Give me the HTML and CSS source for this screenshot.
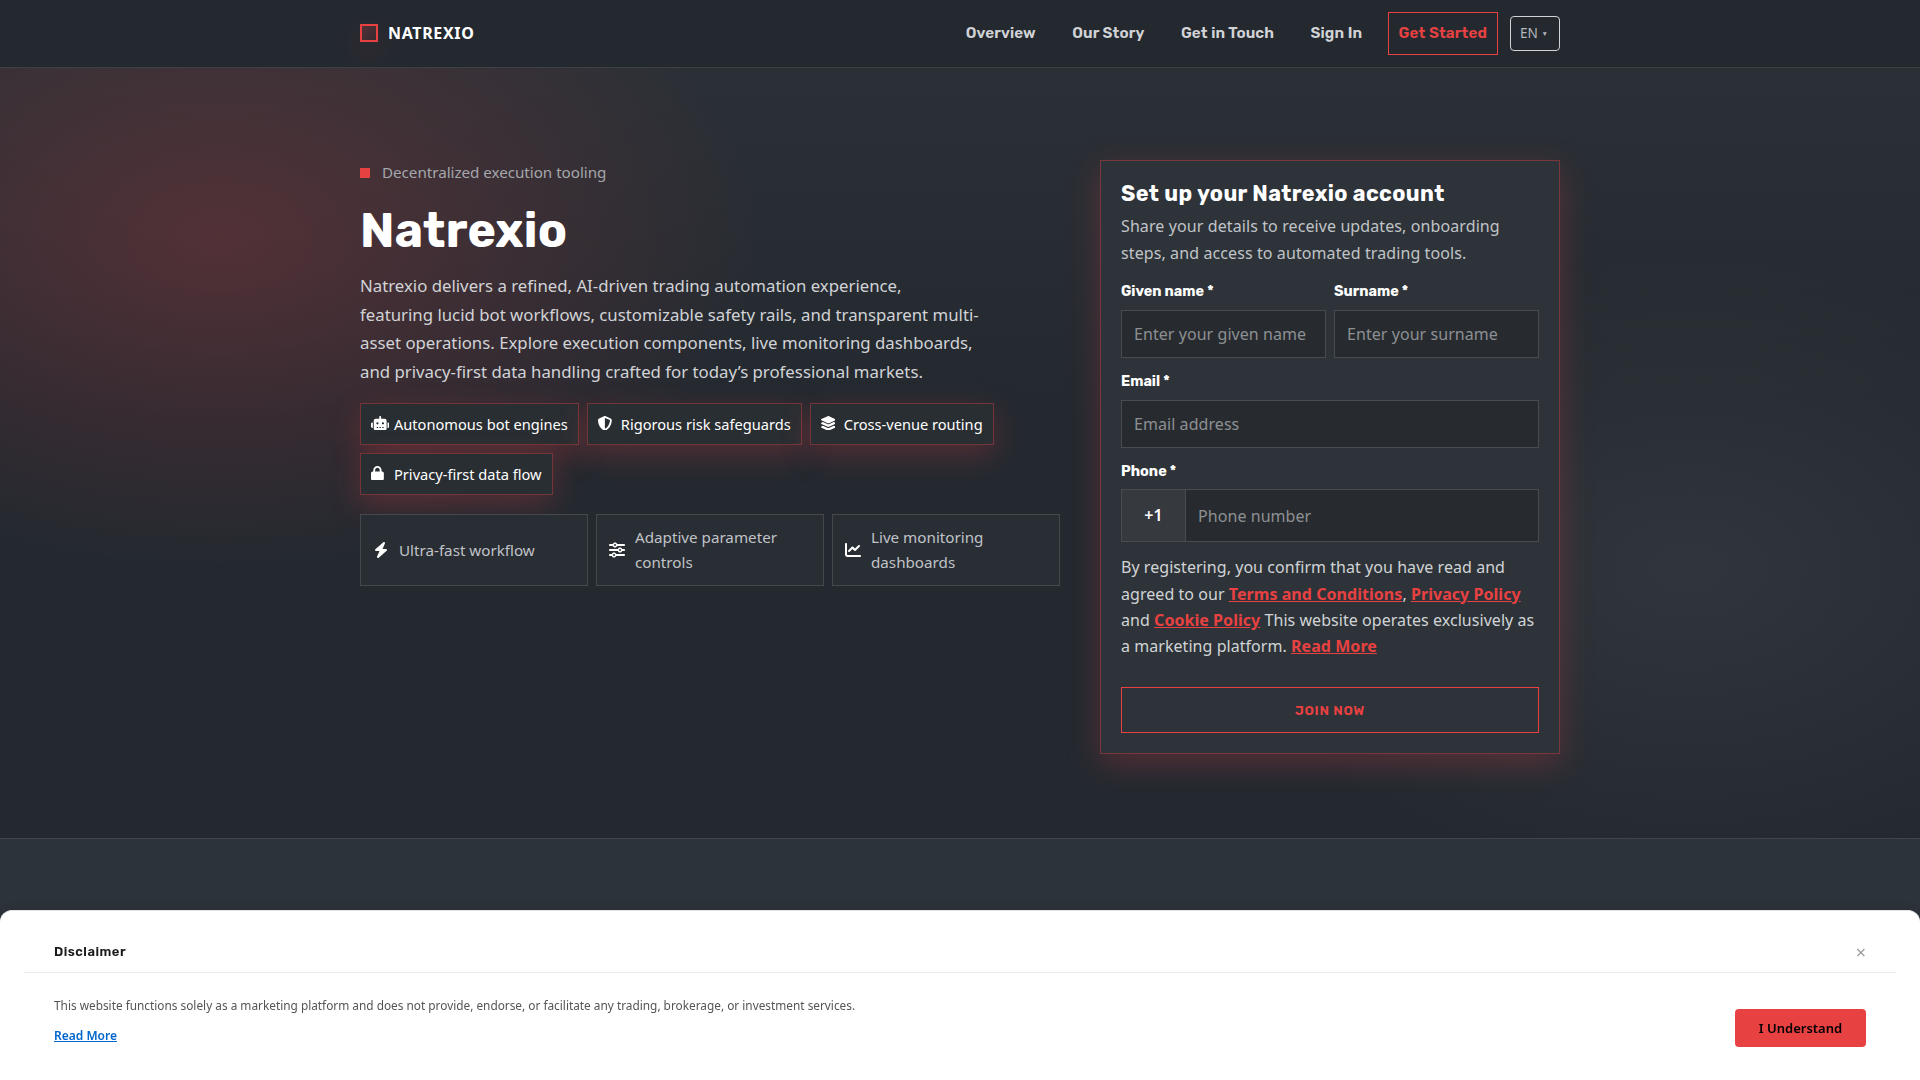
FILE: index.html
```html
<!DOCTYPE html>
<html lang="en">
<head>
    <meta charset="UTF-8">
    <meta name="viewport" content="width=device-width, initial-scale=1.0">
    <title>Natrexio</title>
    <link rel="stylesheet" href="styles.css">
</head>
<body>
    <header class="site-header">
        <div class="container header-inner">
            <a href="#" class="brand">
                <span class="brand-mark"></span>
                <span class="brand-name">NATREXIO</span>
            </a>
            <nav class="nav">
                <a href="#">Overview</a>
                <a href="#">Our Story</a>
                <a href="#">Get in Touch</a>
                <a href="#">Sign In</a>
                <a href="#" class="nav-cta">Get Started</a>
            </nav>
            <button type="button" class="lang">EN <span class="caret">▼</span></button>
        </div>
    </header>

    <main>
        <section class="hero">
            <div class="container hero-grid">
                <div class="hero-copy">
                    <div class="eyebrow"><span class="dot"></span>Decentralized execution tooling</div>
                    <h1>Natrexio</h1>
                    <p class="lead">Natrexio delivers a refined, AI-driven trading automation experience,<br>featuring lucid bot workflows, customizable safety rails, and transparent multi-asset operations. Explore execution components, live monitoring dashboards, and privacy-first data handling crafted for today’s professional markets.</p>

                    <div class="chips">
                        <span class="chip">
                            <span class="icon"><svg viewBox="0 0 640 512"><path d="M320 0c17.700 0 32 14.300 32 32V96H472c39.800 0 72 32.200 72 72V440c0 39.800-32.200 72-72 72H168c-39.800 0-72-32.200-72-72V168c0-39.800 32.200-72 72-72H288V32c0-17.700 14.300-32 32-32zM208 384c-8.800 0-16 7.200-16 16s7.200 16 16 16h32c8.800 0 16-7.200 16-16s-7.200-16-16-16H208zm96 0c-8.800 0-16 7.200-16 16s7.200 16 16 16h32c8.800 0 16-7.200 16-16s-7.200-16-16-16H304zm96 0c-8.800 0-16 7.200-16 16s7.200 16 16 16h32c8.800 0 16-7.200 16-16s-7.200-16-16-16H400zM264 256a40 40 0 1 0 -80 0 40 40 0 1 0 80 0zm152 40a40 40 0 1 0 0-80 40 40 0 1 0 0 80zM48 224H64V416H48c-26.500 0-48-21.500-48-48V272c0-26.500 21.500-48 48-48zm544 0c26.500 0 48 21.500 48 48v96c0 26.500-21.500 48-48 48H576V224h16z"/></svg></span>
                            Autonomous bot engines
                        </span>
                        <span class="chip">
                            <span class="icon"><svg viewBox="16 0 480 512"><path d="M256 0c4.600 0 9.200 1 13.400 2.900L457.700 82.800c22 9.300 38.400 31 38.300 57.200c-.5 99.200-41.300 280.700-213.600 363.200c-16.700 8-36.100 8-52.800 0C57.300 420.700 16.500 239.200 16 140c-.1-26.200 16.300-47.900 38.300-57.200L242.700 2.900C246.800 1 251.400 0 256 0zm0 66.800V444.800C394 378 431.100 230.100 432 141.400L256 66.800z"/></svg></span>
                            Rigorous risk safeguards
                        </span>
                        <span class="chip">
                            <span class="icon"><svg viewBox="32 0 512 512"><path d="M264.500 5.200c14.900-6.900 32.100-6.900 47 0l218.600 101c8.500 3.900 13.900 12.400 13.900 21.800s-5.400 17.900-13.900 21.800l-218.600 101c-14.900 6.900-32.100 6.900-47 0L45.900 149.800C37.400 145.800 32 137.300 32 128s5.400-17.900 13.900-21.800L264.500 5.200zM476.900 209.600l53.200 24.600c8.500 3.900 13.900 12.400 13.900 21.800s-5.400 17.900-13.900 21.800l-218.600 101c-14.900 6.900-32.100 6.900-47 0L45.900 277.800C37.400 273.800 32 265.300 32 256s5.400-17.900 13.900-21.800l53.200-24.600 152 70.200c23.400 10.800 50.400 10.800 73.800 0l152-70.200zm-152 198.200l152-70.200 53.200 24.600c8.500 3.900 13.900 12.400 13.900 21.800s-5.400 17.900-13.900 21.800l-218.600 101c-14.900 6.900-32.100 6.900-47 0L45.900 405.800C37.400 401.800 32 393.300 32 384s5.400-17.900 13.900-21.800l53.200-24.600 152 70.200c23.400 10.800 50.400 10.800 73.800 0z"/></svg></span>
                            Cross-venue routing
                        </span>
                        <span class="chip">
                            <span class="icon"><svg viewBox="0 0 448 512"><path d="M144 144v48H304V144c0-44.200-35.800-80-80-80s-80 35.800-80 80zM80 192V144C80 64.500 144.500 0 224 0s144 64.500 144 144v48h16c35.300 0 64 28.700 64 64V448c0 35.300-28.700 64-64 64H64c-35.300 0-64-28.700-64-64V256c0-35.300 28.700-64 64-64H80z"/></svg></span>
                            Privacy-first data flow
                        </span>
                    </div>

                    <div class="tiles">
                        <div class="tile">
                            <span class="icon"><svg viewBox="0 0 448 512"><path d="M349.400 44.600c5.900-13.700 1.500-29.700-10.600-38.500s-28.600-8-39.900 1.800l-256 224c-10 8.800-13.600 22.900-8.900 35.300S50.700 288 64 288H175.500L98.600 467.400c-5.900 13.700-1.500 29.700 10.600 38.500s28.600 8 39.900-1.800l256-224c10-8.800 13.600-22.900 8.900-35.300s-16.600-20.700-30-20.700H272.500L349.400 44.600z"/></svg></span>
                            <span>Ultra-fast workflow</span>
                        </div>
                        <div class="tile">
                            <span class="icon"><svg viewBox="0 0 512 512"><path d="M0 416c0 17.700 14.300 32 32 32l54.700 0c12.300 28.300 40.500 48 73.300 48s61-19.700 73.300-48L480 448c17.700 0 32-14.300 32-32s-14.300-32-32-32l-246.700 0c-12.300-28.300-40.500-48-73.300-48s-61 19.700-73.300 48L32 384c-17.700 0-32 14.300-32 32zm128 0a32 32 0 1 1 64 0 32 32 0 1 1 -64 0zM320 256a32 32 0 1 1 64 0 32 32 0 1 1 -64 0zm32-80c-32.800 0-61 19.700-73.300 48L32 224c-17.700 0-32 14.300-32 32s14.300 32 32 32l246.700 0c12.300 28.300 40.500 48 73.300 48s61-19.700 73.300-48l54.700 0c17.700 0 32-14.300 32-32s-14.300-32-32-32l-54.700 0c-12.300-28.300-40.500-48-73.300-48zM192 128a32 32 0 1 1 0-64 32 32 0 1 1 0 64zm73.300-64C253 35.700 224.800 16 192 16s-61 19.700-73.300 48L32 64C14.300 64 0 78.300 0 96s14.300 32 32 32l86.700 0c12.300 28.300 40.500 48 73.300 48s61-19.700 73.300-48L480 128c17.700 0 32-14.300 32-32s-14.300-32-32-32L265.300 64z"/></svg></span>
                            <span>Adaptive parameter controls</span>
                        </div>
                        <div class="tile">
                            <span class="icon"><svg viewBox="0 0 512 512"><path d="M64 64c0-17.700-14.300-32-32-32S0 46.300 0 64V400c0 44.200 35.800 80 80 80H480c17.700 0 32-14.300 32-32s-14.300-32-32-32H80c-8.800 0-16-7.200-16-16V64zm406.600 86.600c12.500-12.500 12.500-32.800 0-45.300s-32.800-12.500-45.300 0L320 210.700l-57.400-57.400c-12.500-12.500-32.800-12.500-45.300 0l-112 112c-12.500 12.500-12.500 32.800 0 45.300s32.800 12.500 45.300 0L240 221.300l57.400 57.400c12.500 12.500 32.800 12.500 45.300 0l128-128z"/></svg></span>
                            <span>Live monitoring dashboards</span>
                        </div>
                    </div>
                </div>

                <form class="signup">
                    <h2>Set up your Natrexio account</h2>
                    <p class="signup-intro">Share your details to receive updates, onboarding steps, and access to automated trading tools.</p>
                    <div class="row">
                        <div class="form-group">
                            <label for="first-name">Given name *</label>
                            <input type="text" id="first-name" placeholder="Enter your given name">
                        </div>
                        <div class="form-group">
                            <label for="last-name">Surname *</label>
                            <input type="text" id="last-name" placeholder="Enter your surname">
                        </div>
                    </div>
                    <div class="form-group">
                        <label for="email">Email *</label>
                        <input type="email" id="email" placeholder="Email address">
                    </div>
                    <div class="form-group">
                        <label for="phone" class="phone-label">Phone *</label>
                        <div class="phone">
                            <span class="prefix">+1</span>
                            <input type="tel" id="phone" placeholder="Phone number">
                        </div>
                    </div>
                    <p class="legal">By registering, you confirm that you have read and agreed to our <a href="#">Terms and Conditions</a>, <a href="#">Privacy Policy</a> and <a href="#">Cookie Policy</a> This website operates exclusively as a marketing platform. <a href="#">Read More</a></p>
                    <button type="submit" class="join">JOIN NOW</button>
                </form>
            </div>
        </section>
        <section class="next"></section>
    </main>

    <div class="disclaimer">
        <div class="disclaimer-head">
            <span class="disclaimer-title">Disclaimer</span>
            <button type="button" class="close">×</button>
        </div>
        <div class="disclaimer-body">
            <div>
                <p>This website functions solely as a marketing platform and does not provide, endorse, or facilitate any trading, brokerage, or investment services.</p>
                <a href="#">Read More</a>
            </div>
            <button type="button" class="accept">I Understand</button>
        </div>
    </div>
</body>
</html>
```
FILE: styles.css
```css
* {
    box-sizing: border-box;
}
body {
    margin: 0;
    height: 100vh;
    overflow: hidden;
    background: #242830;
    color: #d1d3d6;
    font-family: "Noto Sans", sans-serif;
    font-size: 16px;
    line-height: 1.65;
}
a {
    text-decoration: none;
}
h1, h2, p {
    margin: 0;
}
button {
    cursor: pointer;
}
.container {
    width: 1200px;
    margin: 0 auto;
}

/* Header */
.site-header {
    height: 68px;
    background: #242930;
    border-bottom: 1px solid #3d4145;
    overflow: hidden;
}
.header-inner {
    display: flex;
    align-items: center;
    height: 67px;
}
.brand {
    display: flex;
    align-items: center;
    gap: 10px;
    margin-right: auto;
    color: #fff;
    font-weight: 700;
    letter-spacing: 0.65px;
}
.brand-mark {
    width: 18px;
    height: 18px;
    border: 2px solid #e84142;
    background: linear-gradient(135deg, rgba(232, 65, 66, 0.25), rgba(232, 65, 66, 0.08));
    box-shadow: 0 10px 30px rgba(232, 65, 66, 0.18);
}
.nav {
    display: flex;
    align-items: center;
    gap: 14.4px;
}
.nav a {
    padding: 8px 10px;
    border: 1px solid transparent;
    color: #d1d3d6;
    font-family: Rubik, Inter, sans-serif;
    font-size: 15.2px;
    font-weight: 600;
    letter-spacing: 0.12px;
}
.nav .nav-cta {
    border-color: #e84142;
    color: #e84142;
}
.lang {
    width: 50px;
    height: 35px;
    margin-left: 12px;
    padding: 0 2px 2px 0;
    background: none;
    border: 1px solid #d1d3d6;
    border-radius: 4px;
    color: #b4b7bb;
    font-family: "Noto Sans", sans-serif;
    font-size: 13.6px;
}
.caret {
    font-size: 6.5px;
    vertical-align: 2px;
}

/* Hero */
.hero {
    height: 771px;
    padding-top: 92px;
    border-bottom: 1px solid #41454b;
    background:
        radial-gradient(540px 330px at 220px 170px, rgba(232, 65, 66, 0.22), transparent),
        radial-gradient(480px 320px at 1690px 500px, rgba(235, 255, 235, 0.06), transparent),
        linear-gradient(180deg, #2b3036, #242930 45%);
}
.hero-grid {
    display: grid;
    grid-template-columns: 1fr 460px;
    gap: 40px;
    align-items: start;
}
.eyebrow {
    display: flex;
    align-items: center;
    gap: 12px;
    color: #a4a7ab;
    font-size: 15.2px;
    letter-spacing: -0.03px;
}
.dot {
    width: 10px;
    height: 10px;
    background: #e84142;
}
h1 {
    margin: 19px 0 15px;
    color: #fff;
    font-family: Rubik, Inter, sans-serif;
    font-size: 48px;
    font-weight: 700;
    letter-spacing: 0.2px;
    line-height: 53px;
}
.lead {
    max-width: 630px;
    font-size: 16.8px;
    line-height: 28.56px;
}
.icon {
    display: flex;
    flex: none;
    align-items: center;
    color: #fff;
}
.icon svg {
    height: 14.7px;
    fill: currentColor;
}
.chips {
    display: flex;
    flex-wrap: wrap;
    gap: 8px;
    margin-top: 16.5px;
}
.chip {
    display: flex;
    align-items: center;
    gap: 4.6px;
    padding: 8px 10px;
    border: 1px solid rgba(232, 65, 66, 0.4);
    background: #292e32;
    box-shadow: 0 10px 30px rgba(232, 65, 66, 0.25);
    color: #fff;
    font-size: 14.62px;
    line-height: 24.2px;
}
.chip .icon {
    width: 18.4px;
}
.chip svg {
    margin-bottom: 2px;
}
.tiles {
    display: grid;
    grid-template-columns: repeat(3, 1fr);
    gap: 8px;
    margin-top: 19px;
}
.tile {
    display: flex;
    align-items: center;
    gap: 10px;
    height: 72px;
    padding: 0 12px;
    border: 1px solid #45494c;
    background: #292d34;
    color: #c0c3c7;
    font-size: 15.2px;
}
.tile .icon {
    justify-content: center;
    width: 16px;
}
.tile .icon svg {
    height: 16px;
}

/* Signup card */
.signup {
    height: 594px;
    padding: 20px;
    border: 1px solid rgba(232, 65, 66, 0.4);
    background: #2d3338;
    box-shadow: 0 10px 30px rgba(232, 65, 66, 0.25);
}
.signup h2 {
    color: #fff;
    font-family: Rubik, Inter, sans-serif;
    font-size: 21.6px;
    font-weight: 700;
    letter-spacing: 0.38px;
    line-height: 26px;
}
.signup-intro {
    margin: 6px 0 13px;
    color: #c0c3c7;
    letter-spacing: 0.1px;
    line-height: 27.2px;
}
.row {
    display: grid;
    grid-template-columns: 1fr 1fr;
    gap: 8px;
}
.form-group {
    margin-bottom: 12px;
}
label {
    display: block;
    margin-bottom: 7px;
    color: #fff;
    font-family: Rubik, Inter, sans-serif;
    font-size: 14.4px;
    font-weight: 700;
    line-height: 23px;
}
.phone-label {
    margin-bottom: 6px;
}
input {
    display: block;
    width: 100%;
    height: 48px;
    padding: 0 12px;
    border: 1px solid #484c50;
    background: #272b2f;
    color: #fff;
    font-family: "Noto Sans", sans-serif;
    font-size: 16px;
    letter-spacing: 0.06px;
    outline: none;
}
input::placeholder {
    color: #8d9093;
    opacity: 1;
}
.phone {
    display: flex;
    height: 53px;
    border: 1px solid #484c50;
}
.prefix {
    display: flex;
    align-items: center;
    justify-content: center;
    width: 64px;
    padding-bottom: 2px;
    border-right: 1px solid #484c50;
    background: #363a3f;
    color: #fff;
    font-weight: 600;
}
.phone input {
    flex: 1;
    height: 51px;
    border: none;
}
.legal {
    letter-spacing: 0.05px;
    line-height: 26.3px;
}
.legal a {
    color: #e84142;
    font-weight: 700;
    text-decoration: underline;
}
.join {
    width: 100%;
    height: 46px;
    margin-top: 27.4px;
    padding: 1px 0 0;
    background: none;
    border: 1px solid #e84142;
    color: #e84142;
    font-family: Rubik, Inter, sans-serif;
    font-size: 13.3px;
    font-weight: 600;
    letter-spacing: 0.7px;
}
.next {
    height: 241px;
    background: #2d333a;
}

/* Disclaimer bar */
.disclaimer {
    position: fixed;
    right: 0;
    bottom: 0;
    left: 0;
    height: 170px;
    padding: 24px;
    border-top: 1px solid #e5e5e5;
    border-radius: 12px 12px 0 0;
    background: #fff;
    box-shadow: 0 -2px 10px rgba(0, 0, 0, 0.1);
}
.disclaimer-head {
    display: flex;
    align-items: center;
    justify-content: space-between;
    height: 38px;
    padding: 0 30px 3px;
    border-bottom: 1px solid #eaeaea;
}
.disclaimer-title {
    color: #1a1a1a;
    font-family: Rubik, Inter, sans-serif;
    font-size: 13px;
    font-weight: 600;
    letter-spacing: 0.5px;
}
.close {
    padding: 0;
    background: none;
    border: none;
    color: #999;
    font-family: "Noto Sans", sans-serif;
    font-size: 18px;
}
.disclaimer-body {
    display: flex;
    align-items: flex-end;
    justify-content: space-between;
    padding: 22px 30px 0;
    color: #555;
    font-size: 11.84px;
    line-height: 20px;
}
.disclaimer-body p {
    margin-bottom: 10px;
}
.disclaimer-body a {
    color: #0066cc;
    font-size: 12px;
    font-weight: 600;
    text-decoration: underline;
}
.accept {
    width: 131px;
    height: 38px;
    margin-bottom: -1px;
    padding: 0;
    background: #e84142;
    border: none;
    border-radius: 4px;
    color: #000;
    font-family: "Noto Sans", sans-serif;
    font-size: 13px;
    font-weight: 600;
}
```
